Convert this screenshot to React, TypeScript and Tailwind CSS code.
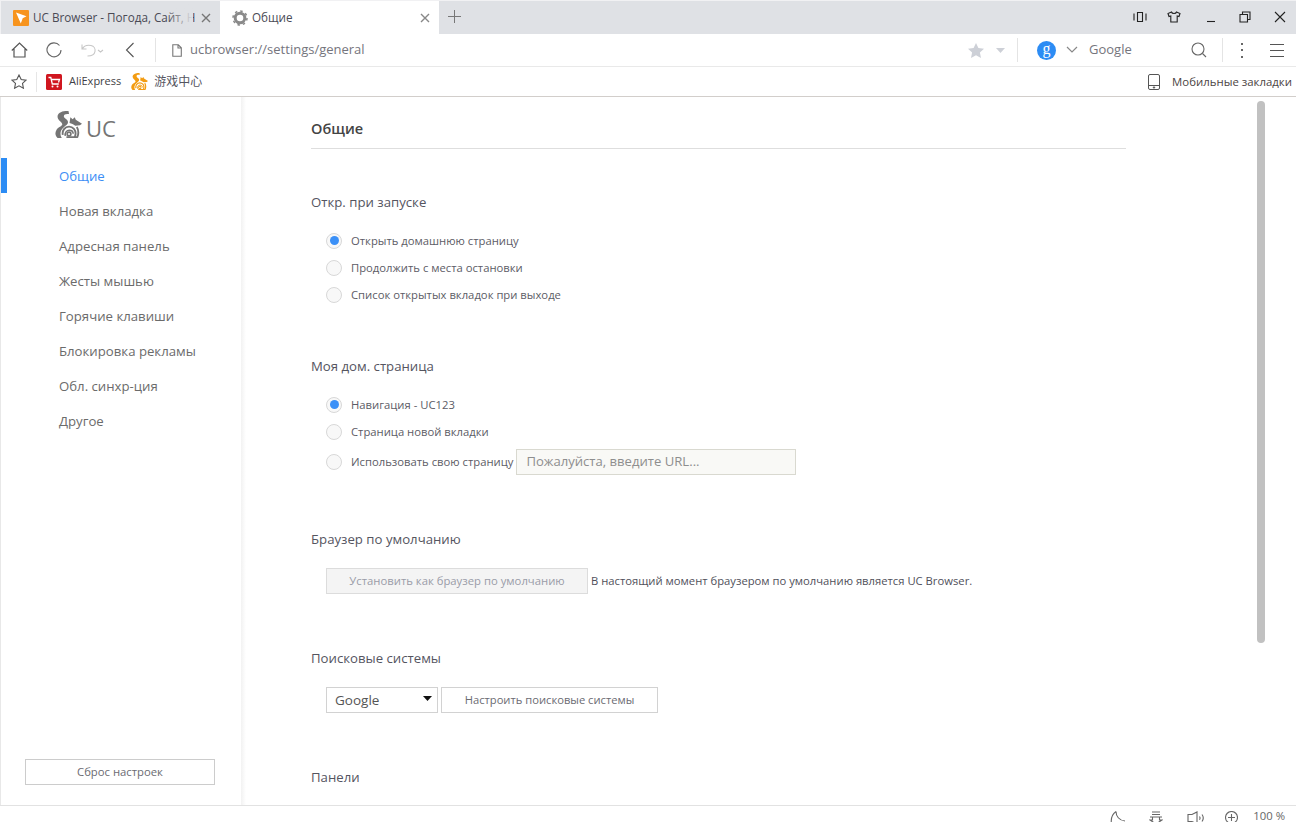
import React from "react";

const font = { fontFamily: '"Open Sans","Noto Sans CJK SC",sans-serif' };

function Radio({ on }: { on?: boolean }) {
  return (
    <span className="w-[16px] h-[16px] rounded-full border border-[#d8d8d8] bg-[#f8f8f8] flex items-center justify-center shrink-0">
      {on && <span className="w-[9px] h-[9px] rounded-full bg-[#3b90f7]" />}
    </span>
  );
}

function RadioRow({ on, label, tall, children }: { on?: boolean; label: string; tall?: boolean; children?: React.ReactNode }) {
  return (
    <div className={`${tall ? "h-[33px]" : "h-[27px]"} flex items-center pl-[15px]`}>
      <Radio on={on} />
      <span className="ml-[9px] mt-[2px] text-[11.27px] text-[#5c5c66] whitespace-nowrap">{label}</span>
      {children}
    </div>
  );
}

function Stroke({ w, h, children, sw = 1.1, color = "#555" }: { w: number; h: number; children: React.ReactNode; sw?: number; color?: string }) {
  return (
    <svg width={w} height={h} viewBox={`0 0 ${w} ${h}`} fill="none" stroke={color} strokeWidth={sw} className="shrink-0">
      {children}
    </svg>
  );
}

function Squirrel({ color, w, h }: { color: string; w: number; h: number }) {
  return (
    <svg width={w} height={h} viewBox="0 0 26 26" className="shrink-0">
      <path fill={color} d="M13 0C7-.5 2 2 2.500 6c.5 3.500 4.500 4.500 4.500 7 0 1.500-4 2.500-5.500 5-2 3.500-1 6.500 1 8h4c-2-3-1.500-7 1-9.500 3-3 5-3.500 5-6 0-2.500-4-3.500-4-5.500 0-2 2.500-2.500 5-2z" />
      <path fill={color} d="M14 11.500l.8-5.500 2.200 2 2-2 1 2.500 6 3.800-2 1.400-4.500.5c-1.800-1.500-3.500-2-5.500-2.700z" />
      <path fill="none" stroke={color} strokeWidth="1.800" d="M7.500 23c-.8-4 2-8 6-8s6.500 3.500 6.300 7c-.1 1.600-.6 3-1.300 4" />
      <path fill="none" stroke={color} strokeWidth="1.500" d="M9.900 24c-.7-3 1.400-5.500 3.800-5.500s3.800 1.500 3.800 3.500" />
      <circle cx="13.500" cy="22.200" r="1.800" fill="none" stroke={color} strokeWidth="1.600" />
      <path fill="none" stroke={color} strokeWidth="1.800" d="M11 25.200h11M21 15.500c1.500 2.500 2 6 .5 9.800" />
    </svg>
  );
}

function Section({ title, mt, children }: { title: string; mt: string; children: React.ReactNode }) {
  return (
    <section className={mt}>
      <h3 className="text-[13.2px] leading-[18px] font-normal text-[#55555f]">{title}</h3>
      {children}
    </section>
  );
}

const nav = ["Общие", "Новая вкладка", "Адресная панель", "Жесты мышью", "Горячие клавиши", "Блокировка рекламы", "Обл. синхр-ция", "Другое"];

export default function App() {
  return (
    <div className="w-[1296px] h-[822px] overflow-hidden flex flex-col bg-white text-[#555]" style={font}>
      {/* tab strip */}
      <div className="h-[34px] bg-[#dfe1e5] flex shrink-0 border-t border-l border-[#f1f1f3]">
        <div className="w-[219px] flex items-center pl-[12px] relative">
          <svg width="16" height="16" viewBox="0 0 16 16" className="shrink-0">
            <rect width="16" height="16" rx="1" fill="#f7941e" />
            <path d="M3 2.500l10.500 3.800-3.800 2L7.800 13.500z" fill="#fff" />
          </svg>
          <span className="ml-[4px] text-[11.7px] text-[#4a4a55] whitespace-nowrap w-[160px]">UC Browser - Погода, Сайт, Н</span>
          <span className="absolute left-[166px] w-[26px] top-0 bottom-0 bg-gradient-to-r from-transparent to-[#dfe1e5]" />
          <svg width="10" height="10" viewBox="0 0 10 10" stroke="#777" strokeWidth="1.400" className="ml-[8px] shrink-0"><path d="M1 1l8 8M9 1l-8 8" /></svg>
        </div>
        <div className="w-[219px] bg-white flex items-center pl-[12px]">
          <svg width="16" height="16" viewBox="0 0 16 16" className="shrink-0">
            <circle cx="8" cy="8" r="4.800" fill="none" stroke="#8a8a8a" strokeWidth="3" />
            <circle cx="8" cy="8" r="7" fill="none" stroke="#8a8a8a" strokeWidth="1.500" strokeDasharray="2.500 3" />
          </svg>
          <span className="ml-[4px] text-[11.7px] text-[#4a4a55]">Общие</span>
          <svg width="10" height="10" viewBox="0 0 10 10" stroke="#888" strokeWidth="1.400" className="ml-[127px] shrink-0"><path d="M1 1l8 8M9 1l-8 8" /></svg>
        </div>
        <svg width="13" height="13" viewBox="0 0 13 13" stroke="#777" strokeWidth="1" className="ml-[9px] mt-[9px]"><path d="M6.500 0v13M0 6.500h13" /></svg>
        <div className="ml-auto flex items-center pr-[10px] mb-[1px]">
          <Stroke w={14} h={12} color="#222"><path d="M4.500 1.500h5v9h-5zM1 2.500v7M13 2.500v7" /></Stroke>
          <span className="w-[20px]" />
          <Stroke w={14} h={12} color="#222"><path d="M4.500 1L1 2.500l1 3 1.800-.5V11h6.400V5l1.800.5 1-3L9.500 1C9 3 5 3 4.500 1z" /></Stroke>
          <span className="w-[25px]" />
          <Stroke w={10} h={12} color="#222"><path d="M1 10.500h8" /></Stroke>
          <span className="w-[23px]" />
          <Stroke w={12} h={12} color="#222"><path d="M1 3.500h7.500V11H1zM3.500 3.500V1H11v7.500H8.500" /></Stroke>
          <span className="w-[23px]" />
          <Stroke w={12} h={12} color="#222"><path d="M1 1l10 10M11 1L1 11" /></Stroke>
        </div>
      </div>

      {/* address bar */}
      <div className="h-[33px] shrink-0 border-b border-[#e9e9e9] flex items-center pl-[11px] pr-[12px]">
        <Stroke w={17} h={16} sw={1.200}><path d="M.8 8.500L8.500 1l7.700 7.500M3 7v8h11V7" /></Stroke>
        <span className="w-[18px]" />
        <Stroke w={16} h={16} color="#666"><path d="M13.500 3.500A7 7 0 1 0 15 8" /></Stroke>
        <span className="w-[19px]" />
        <Stroke w={16} h={15} color="#c6c6c6"><path d="M1 1.500v4.500h4.500M1.300 6C3 2.500 7 2 10 2.500c3 .6 4.500 3.300 4 6-.5 3-3.500 4.500-7.500 4.500" /></Stroke>
        <Stroke w={7} h={15} color="#c6c6c6"><path d="M1 7l2.500 2L6 7" /></Stroke>
        <span className="w-[21px]" />
        <Stroke w={10} h={16} color="#555"><path d="M8.500 1L1.500 8l7 7" /></Stroke>
        <span className="w-[20px]" />
        <span className="w-px h-[24px] bg-[#e4e4e4]" />
        <span className="w-[16px]" />
        <Stroke w={10} h={13} color="#777"><path d="M.8.800h5.500l3 3v8.500H.8zM6 1v3h3" /></Stroke>
        <span className="ml-[8px] text-[13px] text-[#75757d] whitespace-nowrap">ucbrowser://settings/general</span>
        <span className="ml-auto" />
        <svg width="16" height="15" viewBox="0 0 16 15" fill="#cdd0d7"><path d="M8 0l2.400 5.100 5.600.7-4.100 3.800 1.100 5.400L8 12.300 3 15l1.100-5.400L0 5.800l5.600-.7z" /></svg>
        <svg width="9" height="5" viewBox="0 0 9 5" fill="#cdd0d7" className="ml-[12px]"><path d="M0 0h9L4.500 5z" /></svg>
        <span className="w-[12px]" />
        <span className="w-px h-[24px] bg-[#e4e4e4]" />
        <span className="w-[19px]" />
        <span className="w-[19px] h-[19px] rounded-full bg-[#2c8cf4] text-white flex items-center justify-center text-[16px] leading-none pb-[3px]" style={{ fontFamily: '"Liberation Serif",serif' }}>g</span>
        <span className="w-[10px]" />
        <Stroke w={12} h={8} color="#888" sw={1.200}><path d="M1 1l5 5 5-5" /></Stroke>
        <span className="ml-[11px] text-[13px] text-[#75757d] w-[102px]">Google</span>
        <Stroke w={16} h={16} color="#666"><circle cx="7" cy="7" r="6" /><path d="M11.500 11.500L15 15" /></Stroke>
        <span className="w-[15px]" />
        <span className="w-px h-[24px] bg-[#e4e4e4]" />
        <span className="w-[18px]" />
        <span className="flex flex-col gap-[4.500px]">
          <span className="w-[2px] h-[2px] bg-[#666]" /><span className="w-[2px] h-[2px] bg-[#666]" /><span className="w-[2px] h-[2px] bg-[#666]" />
        </span>
        <span className="w-[27px]" />
        <Stroke w={14} h={15} color="#555"><path d="M0 1.500h14M0 7.500h14M0 13.500h14" /></Stroke>
      </div>

      {/* bookmarks bar */}
      <div className="h-[30px] shrink-0 border-b border-[#d2cecb] flex items-center pl-[11px] pr-[4px]">
        <Stroke w={16} h={15} color="#555"><path d="M8 1l2.200 4.500 4.800.6-3.500 3.300.9 4.800L8 11.800l-4.400 2.400.9-4.800L1 6.100l4.800-.6z" /></Stroke>
        <span className="w-[9px]" />
        <span className="w-px h-[20px] bg-[#e6e6e6]" />
        <span className="w-[9px]" />
        <svg width="16" height="16" viewBox="0 0 16 16" className="shrink-0">
          <rect width="16" height="16" rx="1.500" fill="#d0161f" />
          <path d="M2.500 3.500h2.300l1.500 6.500h6.500M5 5.500h8.500l-1 3" fill="none" stroke="#fff" strokeWidth="1.300" />
          <circle cx="6.500" cy="12.500" r="1" fill="#fff" /><circle cx="11.500" cy="12.500" r="1" fill="#fff" />
        </svg>
        <span className="ml-[7px] text-[11px] text-[#3f3f46] whitespace-nowrap">AliExpress</span>
        <span className="w-[10px]" />
        <Squirrel color="#f39c12" w={17} h={17} />
        <span className="ml-[6px] text-[12px] text-[#55555f] whitespace-nowrap">游戏中心</span>
        <span className="ml-auto" />
        <svg width="12" height="16" viewBox="0 0 12 16" fill="none" stroke="#555" className="shrink-0">
          <rect x=".5" y=".5" width="11" height="15" rx="1.500" />
          <path d="M.5 11.500h11" />
          <circle cx="6" cy="13.500" r=".7" fill="#555" />
        </svg>
        <span className="ml-[12px] text-[11.4px] text-[#4c4444] whitespace-nowrap">Мобильные закладки</span>
      </div>

      {/* page */}
      <div className="flex-1 flex min-h-0 relative">
        <aside className="w-[241px] border-l border-[#e8e8e8] shrink-0 bg-white flex flex-col relative">
          <div className="h-[61px] flex items-start pl-[54px] pt-[14px]">
            <Squirrel color="#757575" w={27} h={27} />
            <span className="ml-[4px] text-[22px] leading-[34px] text-[#757575] font-medium">UC</span>
          </div>
          <nav className="flex flex-col">
            {nav.map((n, i) => (
              <div key={n} className={`h-[35px] flex items-center pt-[2px] text-[13.2px] ${i === 0 ? "text-[#3d8ef5] border-l-[6px] border-[#2c8cf4] pl-[52px]" : "text-[#6b6b6b] pl-[58px]"}`}>
                {n}
              </div>
            ))}
          </nav>
          <div className="mt-auto mb-[20px] ml-[24px] mr-[26px] h-[26px] border border-[#cccccc] flex items-center justify-center text-[11.3px] text-[#6b6b72]">Сброс настроек</div>
        </aside>
        <div className="w-[5px] shrink-0 bg-gradient-to-r from-[#f2f2f2] to-white" />
        <main className="flex-1 min-w-0 pl-[65px] pt-[22px] overflow-hidden">
          <div className="w-[815px] border-b border-[#dedede] h-[30px]">
            <h2 className="text-[14.5px] leading-[20px] font-semibold text-[#444]">Общие</h2>
          </div>
          <Section title="Откр. при запуске" mt="mt-[44px]">
            <div className="mt-[16px]">
              <RadioRow on label="Открыть домашнюю страницу" />
              <RadioRow label="Продолжить с места остановки" />
              <RadioRow label="Список открытых вкладок при выходе" />
            </div>
          </Section>
          <Section title="Моя дом. страница" mt="mt-[49px]">
            <div className="mt-[16px]">
              <RadioRow on label="Навигация - UC123" />
              <RadioRow label="Страница новой вкладки" />
              <RadioRow tall label="Использовать свою страницу">
                <span className="ml-[3px] w-[280px] h-[26px] border border-[#d9d9d0] bg-[#f9f9f6] pl-[9px] flex items-center text-[13.1px] text-[#8e8e8e]">Пожалуйста, введите URL...</span>
              </RadioRow>
            </div>
          </Section>
          <Section title="Браузер по умолчанию" mt="mt-[52px]">
            <div className="mt-[20px] pl-[15px] flex items-center">
              <span className="w-[262px] h-[26px] border border-[#dcdcdc] bg-[#f4f4f4] flex items-center justify-center text-[11.3px] text-[#9a9ca8]">Установить как браузер по умолчанию</span>
              <span className="ml-[3px] text-[11.25px] text-[#50505a] whitespace-nowrap">В настоящий момент браузером по умолчанию является UC Browser.</span>
            </div>
          </Section>
          <Section title="Поисковые системы" mt="mt-[55px]">
            <div className="mt-[20px] pl-[15px] flex items-center">
              <span className="w-[112px] h-[26px] border border-[#d2d2d2] flex items-center pl-[8px] text-[13.5px] text-[#555] relative">
                Google
                <svg width="9" height="5" viewBox="0 0 9 5" className="absolute right-[5px] top-[8px]"><path d="M0 0h9L4.500 5z" fill="#111" /></svg>
              </span>
              <span className="ml-[3px] w-[217px] h-[26px] border border-[#d2d2d2] flex items-center justify-center text-[11.2px] text-[#6b6b72]">Настроить поисковые системы</span>
            </div>
          </Section>
          <Section title="Панели" mt="mt-[55px]"><span /></Section>
        </main>
        <div className="absolute left-[1257px] top-[4px] w-[8px] h-[542px] rounded-full bg-[#c1c1c1]" />
      </div>

      {/* status bar */}
      <div className="h-[17px] shrink-0 border-t border-[#e2e2e2] flex items-start pt-[5px] pr-[11px] justify-end overflow-hidden">
        <Stroke w={16} h={14} color="#666"><path d="M6 .5C2.500 3 .5 7 1.500 13M6 .5C6 5 9 9.500 15 10" /></Stroke>
        <span className="w-[23px]" />
        <Stroke w={14} h={14} color="#666"><path d="M3 1h8M3 3.500h8M1 6h12M3.500 6v3H1l6 4 6-4h-2.500V6" /></Stroke>
        <span className="w-[24px]" />
        <Stroke w={19} h={14} color="#666"><path d="M1 3.500h4L10 1v12L5 10.500H1zM12.500 5.500c.7 1 .7 2.200 0 3.200M15 3.500c1.600 2.200 1.600 4.800 0 7" /></Stroke>
        <span className="w-[19px]" />
        <Stroke w={13} h={13} color="#666"><circle cx="6.500" cy="6.500" r="6" /><path d="M6.500 3v7M3 6.500h7" /></Stroke>
        <span className="ml-[15px] -mt-[1px] text-[11.3px] leading-[12px] text-[#666] whitespace-nowrap">100 %</span>
      </div>
    </div>
  );
}
